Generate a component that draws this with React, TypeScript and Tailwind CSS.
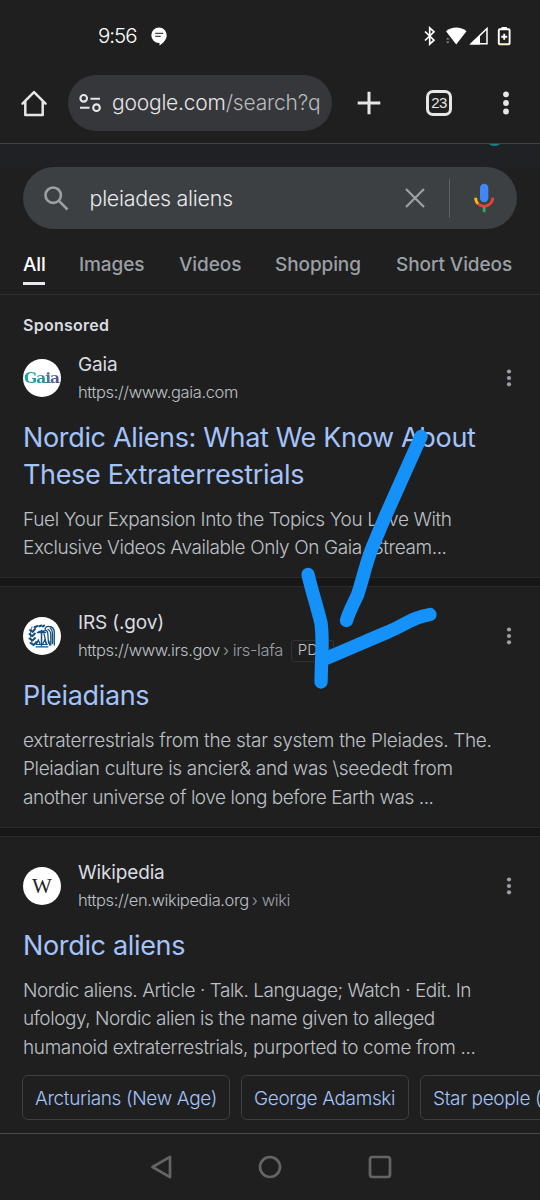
import React from "react";
import clsx from "clsx";

type Line = { text: string; tracking: string };

type Result = {
  name: string;
  url: string;
  path?: string;
  badge?: string;
  icon: React.ReactNode;
  title: string[];
  snippet: Line[];
};

const tabs = [
  { label: "Images", className: "ml-[34px] w-[67px]" },
  { label: "Videos", className: "ml-[33px] w-[63px]" },
  { label: "Shopping", className: "ml-[33px] w-[88px]" },
  { label: "Short Videos", className: "ml-[33px] w-[118px]" },
];

const chips = [
  { label: "Arcturians (New Age)", className: "w-[208px]" },
  { label: "George Adamski", className: "w-[168px]" },
  { label: "Star people (newage)", className: "w-[210px]" },
];

function GaiaIcon() {
  return (
    <span className="bg-linear-to-r from-[#1fa5a5] via-[#2b8f9f] to-[#5b4b8a] bg-clip-text pr-px font-['DejaVu_Serif','Liberation_Serif',serif] text-[15.500px] font-bold tracking-[-1px] text-transparent">
      Gaia
    </span>
  );
}

function IrsIcon() {
  return (
    <svg viewBox="0 0 38 38" className="size-[38px]" fill="none" stroke="#14507f" strokeWidth="1.5" strokeLinecap="round">
      {/* laurel branch */}
      <path d="M9 10c-2 4-2.500 11 1 18" strokeWidth="0.900" />
      <path d="M7 13l2.500 2M6.500 17l2.500 2M6.500 21.500l3 2M7.500 26l3 2M12 12l-2.200 2.500M11.800 16.500l-2.300 2.500M12 21l-2.500 2.500M13.500 25l-3 3" strokeWidth="2" />
      <path d="M11.500 10.200l3-1.200M16.500 9.300l2-.8M20 9.500l1.200-1" strokeWidth="2" />
      {/* scales */}
      <path d="M14.500 15.500h8M18.500 13.500v15M16 14.500l5-.5" />
      <path d="M15.300 23l-2 4.500h4zM21.800 23l-2.300 4.500h4.500zM13 29.800h12" strokeWidth="1.200" />
      {/* eagle wing */}
      <path d="M22 13.500c0-3.500 2-4.500 4-4 3 .2 5.300 2.500 5.300 6V28M22 13.500c2-.5 2.500 1 2.800 3l.7 9.500M25 12.500c2 1 2.800 3 2.800 6V28M27.500 11.500c1.500 1 2 3 2 6v9" strokeWidth="1.300" />
      <path d="M21 17c1.200 3 1 7 2.500 10.500M25.800 24l1 4" strokeWidth="1.300" />
    </svg>
  );
}

function WikipediaIcon() {
  return (
    <span className="mt-0.5 font-['Liberation_Serif',serif] text-[21px] leading-none text-[#222]">W</span>
  );
}

const results: Result[] = [
  {
    name: "Gaia",
    url: "https://www.gaia.com",
    icon: <GaiaIcon />,
    title: ["Nordic Aliens: What We Know About", "These Extraterrestrials"],
    snippet: [
      { text: "Fuel Your Expansion Into the Topics You Love With", tracking: "tracking-[-0.37px]" },
      { text: "Exclusive Videos Available Only On Gaia. Stream...", tracking: "tracking-[-0.4px]" },
    ],
  },
  {
    name: "IRS (.gov)",
    url: "https://www.irs.gov",
    path: "irs-lafa",
    badge: "PDF",
    icon: <IrsIcon />,
    title: ["Pleiadians"],
    snippet: [
      { text: "extraterrestrials from the star system the Pleiades. The.", tracking: "tracking-[-0.31px]" },
      { text: "Pleiadian culture is ancier& and was \\seededt from", tracking: "tracking-[-0.34px]" },
      { text: "another universe of love long before Earth was ...", tracking: "tracking-[-0.46px]" },
    ],
  },
  {
    name: "Wikipedia",
    url: "https://en.wikipedia.org",
    path: "wiki",
    icon: <WikipediaIcon />,
    title: ["Nordic aliens"],
    snippet: [
      { text: "Nordic aliens. Article · Talk. Language; Watch · Edit. In", tracking: "tracking-[-0.46px]" },
      { text: "ufology, Nordic alien is the name given to alleged", tracking: "tracking-[-0.45px]" },
      { text: "humanoid extraterrestrials, purported to come from ...", tracking: "tracking-[-0.37px]" },
    ],
  },
];

function StatusBar() {
  return (
    <div className="flex h-[72px] items-center pl-[98px] pr-[26px] text-white">
      <span className="w-[40px] whitespace-nowrap text-[20.5px] font-light tracking-[-1px]">9:56</span>
      <svg viewBox="0 0 16 19" className="ml-[13px] h-[19px] w-4">
        <path d="M8 .5a7.700 7.700 0 0 1 7.700 7.700c0 4-3 7.600-7.200 10.200v-2.500H8A7.700 7.700 0 0 1 8 .5z" fill="#fff" />
        <path d="M4.200 6.300h8M4.200 9.300h5.500" stroke="#444" strokeWidth="1.300" />
      </svg>
      <svg viewBox="0 0 92 20" className="ml-auto mr-[-1px] h-5 w-[92px]">
        <path d="M2 5.500l9 8.700-4.300 3.900V1.900L11 5.800l-9 8.700" fill="none" stroke="#fff" strokeWidth="1.700" />
        <path d="M23 5.300C28.500.3 38 .3 43.500 5.300L33.200 18.500z" fill="#fff" />
        <path d="M23 13.500l1.800-2 1.800 2zM23 15.500l1.800 2 1.800-2z" fill="#888" />
        <path d="M64 2.500v15.200H48.200z" fill="none" stroke="#fff" strokeWidth="1.500" />
        <path d="M57 9v9.400H47z" fill="#fff" />
        <rect x="75.800" y="3.200" width="10.800" height="15" rx="1" fill="none" stroke="#fff" strokeWidth="1.900" />
        <path d="M78.500 1h5.400v2h-5.400z" fill="#fff" />
        <path d="M76.700 17.800h9" stroke="#e8c56a" strokeWidth="1" />
        <path d="M81.200 7.700v6M78.200 10.700h6" stroke="#fff" strokeWidth="1.900" />
      </svg>
    </div>
  );
}

function Toolbar() {
  return (
    <div className="flex h-[72px] items-start border-b border-[#414443] pt-[3px] text-[#e6e6e6]">
      <div className="flex h-14 w-[68px] items-center pl-[21px]">
        <svg viewBox="0 0 26 27" className="h-[27px] w-[26px]" fill="none" stroke="currentColor" strokeWidth="2.500" strokeLinejoin="round" strokeLinecap="round">
          <path d="M1.500 13.700L13 2.200l11.500 11.500M4.300 12v13h17.400V12" />
        </svg>
      </div>
      <div className="flex h-14 w-[264px] items-center overflow-hidden rounded-full bg-[#36373a] pl-[11px]">
        <svg viewBox="0 0 22 20" className="h-5 w-[22px] shrink-0" fill="none" stroke="currentColor" strokeWidth="2.100">
          <circle cx="4.700" cy="5.300" r="3.300" />
          <path d="M11.500 5.800H21M1 14.800h9.500" />
          <circle cx="17.500" cy="14.700" r="3.300" />
        </svg>
        <span className="ml-[11px] w-[208px] overflow-hidden whitespace-nowrap text-[21px] font-light leading-8 tracking-[-0.2px]">
          google.com<span className="text-[#b9babd]">/search?q</span>
        </span>
      </div>
      <div className="flex h-14 flex-1 items-center">
        <svg viewBox="0 0 24 24" className="ml-[25px] size-6" stroke="currentColor" strokeWidth="3">
          <path d="M12 .7v22.600M.7 12h22.600" />
        </svg>
        <div className="ml-[45px] flex size-[26px] items-center justify-center rounded-[7px] border-[3px] border-current font-['Liberation_Sans',sans-serif] text-[15px] tracking-[-0.6px]">
          23
        </div>
        <svg viewBox="0 0 6 24" className="ml-[51px] h-6 w-1.5" fill="currentColor">
          <circle cx="3" cy="3.300" r="2.900" />
          <circle cx="3" cy="12" r="2.900" />
          <circle cx="3" cy="20.500" r="2.900" />
        </svg>
      </div>
    </div>
  );
}

function SearchBox() {
  return (
    <>
      <div className="flex h-[23px] justify-end overflow-hidden bg-[#202124] pr-[36px]">
        <div className="-mt-[17px] size-[19px] rounded-full bg-[#16818a]" />
      </div>
      <div className="mx-[23px] flex h-[62px] items-center rounded-full bg-[#3c4043] pl-[21px]">
        <svg viewBox="0 0 25 25" className="size-[25px]" fill="none" stroke="#9aa0a6" strokeWidth="2.600">
          <circle cx="9.200" cy="9.200" r="7.700" />
          <path d="M14.700 14.700l8.800 8.800" />
        </svg>
        <span className="ml-[20.500px] flex-1 whitespace-nowrap text-[21.500px] font-light tracking-[-0.3px] text-[#e8eaed]">
          pleiades aliens
        </span>
        <svg viewBox="0 0 20 20" className="size-5" stroke="#9aa0a6" strokeWidth="2.200">
          <path d="M1 1l18 18M19 1L1 19" />
        </svg>
        <div className="ml-6 h-[39px] w-px bg-[#5f6368]" />
        <svg viewBox="0 0 20 30" className="ml-6 mr-[23px] h-[30px] w-5" fill="none">
          <rect x="6" y=".8" width="8.300" height="18.500" rx="4.150" fill="#4285f4" />
          <path d="M1.600 14.800a8.500 8.500 0 0 0 2.700 6.200" stroke="#fbbc04" strokeWidth="2.800" />
          <path d="M4 20.800a8.800 8.800 0 0 0 14.800-6" stroke="#ea4335" strokeWidth="2.800" />
          <path d="M10.200 24v5.200" stroke="#34a853" strokeWidth="2.800" />
        </svg>
      </div>
    </>
  );
}

function Tabs() {
  return (
    <nav className="flex h-[66px] items-start overflow-hidden border-b border-[#2b2c2e] pl-[23px] pt-[21px] text-[19px] font-medium leading-[30px] tracking-[-0.1px] text-[#9aa0a6]">
      <div className="h-[35px] w-[22px] border-b-[3px] border-[#e8eaed] text-white">All</div>
      {tabs.map((tab) => (
        <div key={tab.label} className={clsx("shrink-0 whitespace-nowrap", tab.className)}>
          {tab.label}
        </div>
      ))}
    </nav>
  );
}

function ResultItem({ result }: { result: Result }) {
  return (
    <article className="pl-[23px]">
      <div className="flex h-14 items-center">
        <div className="mt-[-1px] flex size-[38px] items-center justify-center overflow-hidden rounded-full bg-white">
          {result.icon}
        </div>
        <div className="ml-[17px] flex-1 whitespace-nowrap pt-px">
          <div className="text-[19px] leading-7 tracking-[-0.15px] text-[#dadce0]">{result.name}</div>
          <div className="flex h-[27px] items-center text-[16.500px] font-light tracking-[-0.38px] text-[#bdc1c6]">
            {result.url}
            {result.path && <span className="ml-[3px] text-[#9aa0a6]">› {result.path}</span>}
            {result.badge && (
              <span className="ml-2 flex h-[22px] w-[43px] items-center justify-center rounded-[3px] border border-[#303234] text-[15px] tracking-normal">
                {result.badge}
              </span>
            )}
          </div>
        </div>
        <svg viewBox="0 0 4 18" className="mr-[29px] h-[18px] w-1" fill="#9aa0a6" overflow="visible">
          <circle cx="2" cy="2.500" r="2.100" />
          <circle cx="2" cy="9" r="2.100" />
          <circle cx="2" cy="15.300" r="2.100" />
        </svg>
      </div>
      <h3 className="mt-[13px] whitespace-nowrap text-[27px] leading-[37px] tracking-[-0.34px] text-[#a3c3fa]">
        {result.title.map((line) => (
          <div key={line}>{line}</div>
        ))}
      </h3>
      <div className="mt-[13px] whitespace-nowrap text-[19px] font-light leading-[28.300px] text-[#bdc1c6]">
        {result.snippet.map((line) => (
          <div key={line.text} className={line.tracking}>
            {line.text}
          </div>
        ))}
      </div>
    </article>
  );
}

function Divider() {
  return <div className="h-2.5 border-y border-[#292a2c] bg-[#171718]" />;
}

function NavBar() {
  return (
    <div className="flex h-[66px] items-center border-t border-[#4a4a4a] pl-[150px]">
      <svg viewBox="0 0 242 26" className="h-[26px] w-[242px]" fill="none" stroke="#646464" strokeWidth="2.700" strokeLinejoin="round">
        <path d="M2.500 13L20 2.800v20.400z" />
        <circle cx="120" cy="13" r="10" />
        <rect x="220" y="3" width="20" height="20" rx="2.500" />
      </svg>
    </div>
  );
}

// freehand marker arrow drawn over the page
function MarkerArrow() {
  return (
    <svg
      viewBox="0 0 540 1200"
      className="pointer-events-none absolute inset-0 h-[1200px] w-[540px]"
      fill="none"
      stroke="#1592f9"
      strokeWidth="13.300"
      strokeLinecap="round"
      strokeLinejoin="round"
    >
      <path d="M421 436.500L385 517L372 548C366 563 362 582 357.500 595C354 603 350 609 346.500 620.500" />
      <path d="M308 574.500C312 592 317 606 321 623C323 638 322 652 321.500 664L321 682" />
      <path d="M430 614.500C414 617 406 624 388 632C366 641 347 650 322 660" />
    </svg>
  );
}

export default function App() {
  const [sponsored, ...organic] = results;

  return (
    <div className="relative h-[1200px] w-[540px] overflow-hidden bg-[#1f1f1f] font-['Inter','Liberation_Sans',sans-serif]">
      <StatusBar />
      <Toolbar />
      <SearchBox />
      <Tabs />
      <section className="h-[282px]">
        <div className="pl-[23px] pt-[18px] text-[16px] font-semibold leading-6 tracking-[0.25px] text-[#dadce0]">
          Sponsored
        </div>
        <div className="pt-[13px]">
          <ResultItem result={sponsored} />
        </div>
      </section>
      {organic.map((result, i) => (
        <section key={result.name}>
          <Divider />
          <div className={clsx("pt-[21px]", i === 0 ? "h-[240px]" : "h-[296px]")}>
            <ResultItem result={result} />
            {i === 1 && (
              <div className="mt-[13px] flex gap-[11px] overflow-hidden pl-[22px]">
                {chips.map((chip) => (
                  <div
                    key={chip.label}
                    className={clsx(
                      "flex h-[45px] shrink-0 items-center whitespace-nowrap rounded-md border border-[#3c4043] pl-3 pt-[3px] text-[19px] font-light tracking-[-0.36px] text-[#a3c3fa]",
                      chip.className,
                    )}
                  >
                    {chip.label}
                  </div>
                ))}
              </div>
            )}
          </div>
        </section>
      ))}
      <NavBar />
      <MarkerArrow />
    </div>
  );
}
